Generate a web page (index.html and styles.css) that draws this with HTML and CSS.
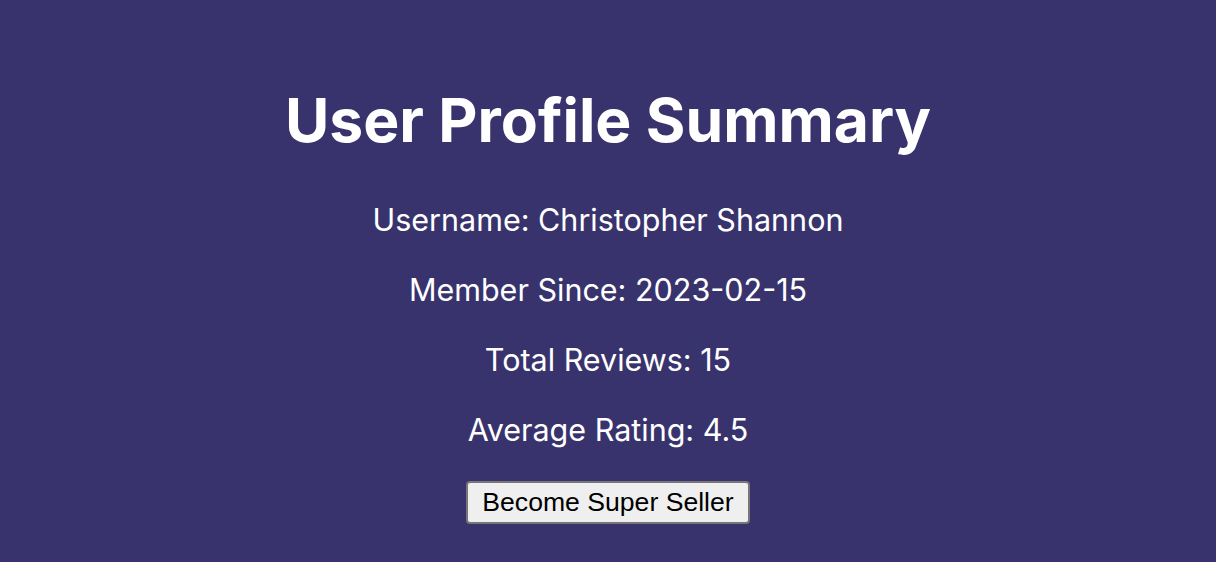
FILE: index.html
```html
<!DOCTYPE html>
<html>
<head>
<meta charset="utf-8">
<link rel="stylesheet" href="styles.css">
</head>
<body>
<main class="profile">
  <h1 class="title">User Profile Summary</h1>
  <p class="line">Username: Christopher Shannon</p>
  <p class="line">Member Since: 2023-02-15</p>
  <p class="line">Total Reviews: 15</p>
  <p class="line">Average Rating: 4.5</p>
  <button class="btn">Become Super Seller</button>
</main>
</body>
</html>
```
FILE: styles.css
```css
html, body {
  margin: 0;
  height: 100%;
}
body {
  background: #38336d;
  color: #ffffff;
  font-family: Inter, "Noto Sans", sans-serif;
}
.profile {
  display: flex;
  flex-direction: column;
  align-items: center;
  padding-top: 84px;
}
.title {
  font-size: 60.6px;
  font-weight: 700;
  line-height: 72px;
  margin: 0 0 46px;
}
.line {
  font-size: 30.5px;
  line-height: 36px;
  margin: 0 0 34px;
}
.btn {
  margin-top: -1px;
  font-family: "Liberation Sans", Arial, sans-serif;
  font-size: 26.6px;
  line-height: 31px;
  padding: 4px 14px;
  color: #000;
  background: #efefef;
  border: 2px solid #767676;
  border-radius: 4px;
}
```
